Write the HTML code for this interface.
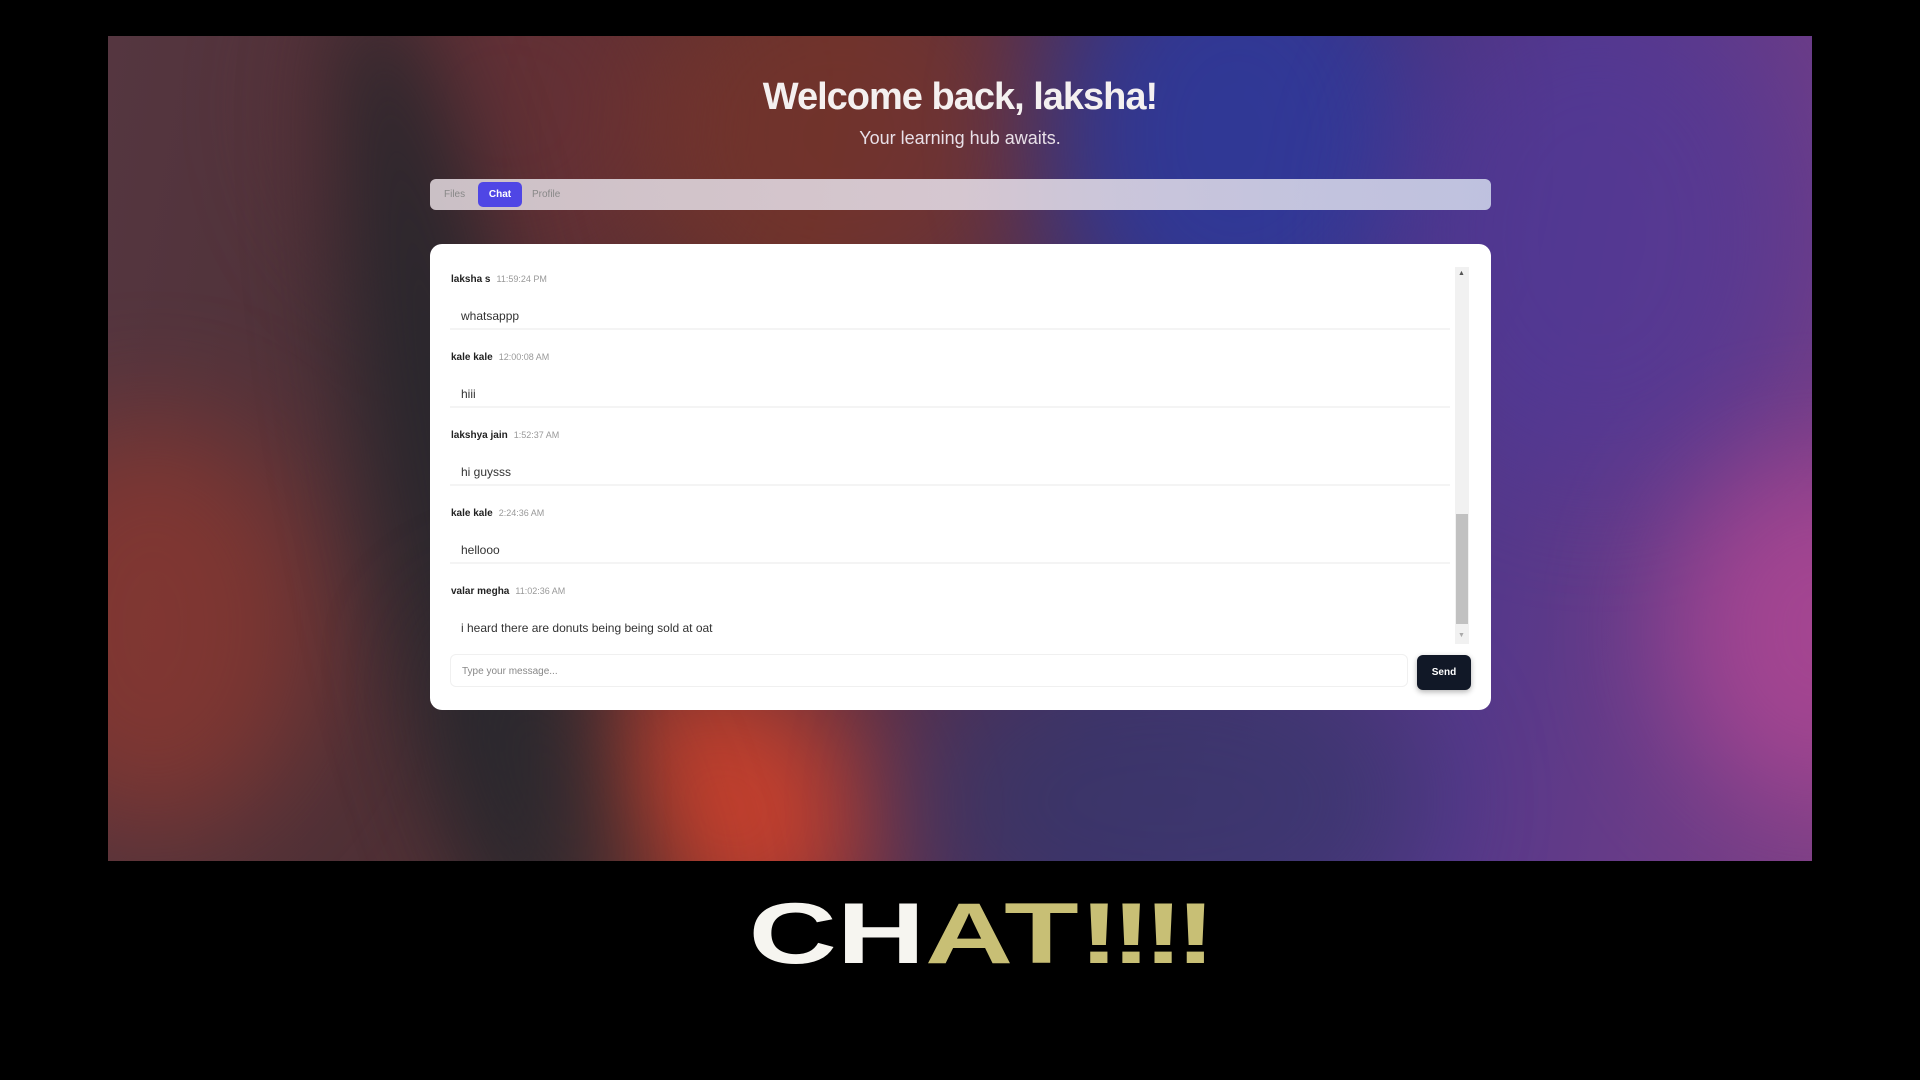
<!DOCTYPE html>
<html><head><meta charset="utf-8"><style>
*{margin:0;padding:0;box-sizing:border-box}
body{width:1920px;height:1080px;background:#000;overflow:hidden;font-family:"Liberation Sans",sans-serif;position:relative}
#panel{position:absolute;left:108px;top:36px;width:1704px;height:825px;overflow:hidden;background:linear-gradient(100deg,#553640 0%,#4e3036 20%,#5e3032 40%,#4a3068 60%,#55388a 80%,#7a3f85 100%)}
.b{position:absolute;border-radius:50%;filter:blur(60px)}
h1{position:absolute;top:76px;left:0;width:1920px;text-align:center;color:#f4f0f0;font-size:38px;font-weight:bold;letter-spacing:-1px}
.sub{position:absolute;top:128px;left:0;width:1920px;text-align:center;color:#e8e0e8;font-size:18px}
#tabs{position:absolute;left:430px;top:179px;width:1061px;height:31px;border-radius:6px;background:linear-gradient(90deg,rgba(215,205,210,.92),rgba(225,215,225,.9) 50%,rgba(200,205,230,.92));}
#tabs span{position:absolute;top:10px;font-size:10px;color:#888}
#tabs .chat{left:48px;top:3px;width:44px;height:25px;background:#4f46e5;color:#fff;border-radius:5px;text-align:center;line-height:25px;font-weight:bold}
#card{position:absolute;left:430px;top:244px;width:1061px;height:466px;background:#fff;border-radius:12px}
.msg{position:absolute;left:20px;width:1000px;height:78px;border-bottom:2px solid #f4f4f4}
.n{position:absolute;left:1px;top:22px;font-size:10px;font-weight:bold;color:#222}
.n i{font-style:normal;font-weight:normal;color:#999;font-size:9px;margin-left:6px}
.t{position:absolute;left:11px;top:57px;font-size:12px;color:#333}
#sb{position:absolute;left:1025px;top:23px;width:14px;height:377px;background:#f1f1f1}
#th{position:absolute;left:1026px;top:270px;width:12px;height:110px;background:#c1c1c1}
#in{position:absolute;left:20px;top:410px;width:958px;height:33px;border:1px solid #f0f0f0;border-radius:6px;font-size:10px;color:#888;padding:11px 11px}
#send{position:absolute;left:987px;top:411px;width:54px;height:35px;background:#111827;border-radius:6px;color:#fff;font-size:10px;font-weight:bold;text-align:center;line-height:35px;box-shadow:0 2px 6px rgba(0,0,0,.3)}
#big{position:absolute;top:884px;left:18px;width:1920px;text-align:center;font-size:86px;line-height:100px;font-weight:900;color:#f6f5f0;letter-spacing:0;transform:scaleX(1.42)}
#big b{color:#c8bf75}
#big em{font-style:normal;letter-spacing:-6px}
</style></head><body>
<div id="panel">
<div class="b" style="left:-120px;top:380px;width:330px;height:420px;background:#93382e;opacity:.7"></div>
<div class="b" style="left:200px;top:-120px;width:400px;height:380px;background:#6e3036;opacity:.6"></div>
<div class="b" style="left:520px;top:-100px;width:420px;height:400px;background:#7e3628;opacity:.6"></div>
<div class="b" style="left:940px;top:-120px;width:380px;height:440px;background:#2a3aa0;opacity:.8"></div>
<div class="b" style="left:1280px;top:-50px;width:420px;height:500px;background:#503898;opacity:.6"></div>
<div class="b" style="left:1560px;top:420px;width:300px;height:350px;background:#b84896;opacity:.7"></div>
<div class="b" style="left:470px;top:640px;width:300px;height:260px;background:#d8432c;opacity:.85;transform:rotate(30deg)"></div>
<div class="b" style="left:800px;top:600px;width:520px;height:330px;background:#32386a;opacity:.6"></div>
<div class="b" style="left:260px;top:-60px;width:170px;height:1000px;background:#26262c;transform:rotate(-10deg);opacity:.9;filter:blur(45px)"></div>
<div class="b" style="left:380px;top:560px;width:140px;height:400px;background:#2a2a30;opacity:.7;transform:rotate(-25deg)"></div>
</div>
<h1>Welcome back, laksha!</h1>
<div class="sub">Your learning hub awaits.</div>
<div id="tabs"><span style="left:14px">Files</span><span class="chat">Chat</span><span style="left:102px">Profile</span></div>
<div id="card">
<div class="msg" style="top:8px"><div class="n">laksha s<i>11:59:24 PM</i></div><div class="t">whatsappp</div></div>
<div class="msg" style="top:86px"><div class="n">kale kale<i>12:00:08 AM</i></div><div class="t">hiii</div></div>
<div class="msg" style="top:164px"><div class="n">lakshya jain<i>1:52:37 AM</i></div><div class="t">hi guysss</div></div>
<div class="msg" style="top:242px"><div class="n">kale kale<i>2:24:36 AM</i></div><div class="t">hellooo</div></div>
<div class="msg" style="top:320px;border:none"><div class="n">valar megha<i>11:02:36 AM</i></div><div class="t">i heard there are donuts being being sold at oat</div></div>
<div id="sb"></div><div id="th"></div>
<div style="position:absolute;left:1028px;top:26px;font-size:7px;color:#555">▲</div>
<div style="position:absolute;left:1028px;top:388px;font-size:7px;color:#aaa">▼</div>
<div id="in">Type your message...</div>
<div id="send">Send</div>
</div>
<div id="big">CH<b>AT<em>!!!!</em></b></div>
</body></html>
